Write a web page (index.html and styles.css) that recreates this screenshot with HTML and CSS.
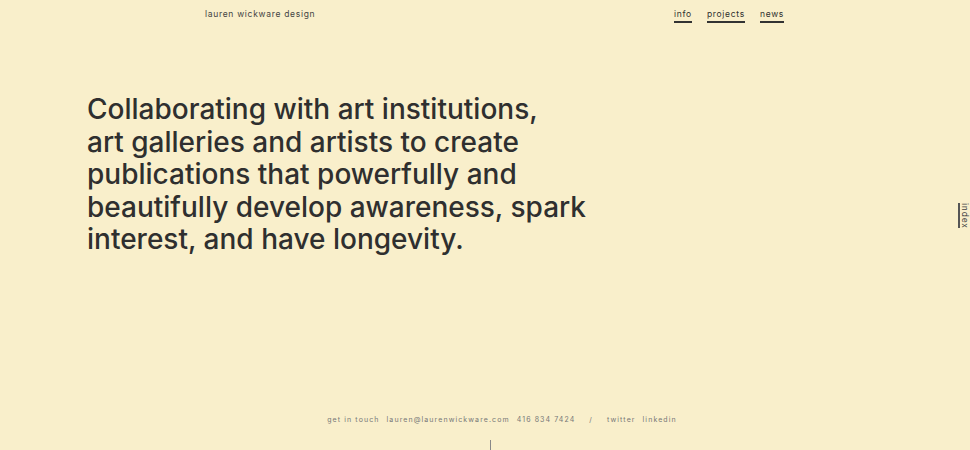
FILE: index.html
```html
<!DOCTYPE html>
<html lang="en">
<head>
<meta charset="utf-8">
<title>lauren wickware design</title>
<link rel="stylesheet" href="styles.css">
</head>
<body>
<div class="page">
  <header class="topbar">
    <a class="brand" href="#">lauren wickware design</a>
    <nav class="nav">
      <a href="#">info</a>
      <a href="#">projects</a>
      <a href="#">news</a>
    </nav>
  </header>
  <main class="hero">
    <h1>Collaborating with art institutions,<br> art galleries and artists to create publications that powerfully and beautifully develop awareness, spark interest, and have longevity.</h1>
  </main>
  <footer class="footer">
    <p class="contact"><span>get in touch</span><span>lauren@laurenwickware.com</span><span>416 834 7424</span><span class="sep">/</span><span>twitter</span><span>linkedin</span></p>
    <div class="arrow"></div>
  </footer>
  <a class="index-tab" href="#">index</a>
</div>
</body>
</html>
```
FILE: styles.css
```css
html, body {
  margin: 0;
  padding: 0;
  background: #f9efcb;
  color: #2f2f2f;
  font-family: "Inter", "Liberation Sans", sans-serif;
}
a { color: inherit; text-decoration: none; }
.page {
  height: 450px;
  display: flex;
  flex-direction: column;
  overflow: hidden;
}
.topbar {
  display: flex;
  justify-content: space-between;
  padding: 9px 186px 0 205px;
  font-size: 8.5px;
  letter-spacing: 0.7px;
  height: 22px;
  box-sizing: border-box;
}
.brand { color: #444; }
.nav { display: flex; gap: 15px; }
.nav a {
  border-bottom: 2px solid #333;
  padding-bottom: 1px;
  height: 11px;
  line-height: 11px;
}
.hero {
  padding: 71px 0 0 87px;
  flex: 1;
}
.hero h1 {
  margin: 0;
  width: 520px;
  font-size: 28px;
  font-weight: 500;
  line-height: 32.5px;
  letter-spacing: 0;
}
.footer {
  display: flex;
  flex-direction: column;
  align-items: center;
  padding-left: 34px;
}
.contact {
  margin: 0 0 16px;
  font-size: 7px;
  letter-spacing: 1.1px;
  color: #777;
  display: flex;
  gap: 7px;
}
.contact .sep { margin: 0 7px; }
.arrow {
  width: 1px;
  height: 10px;
  background: #888;
  margin-left: -24px;
}
.index-tab {
  position: absolute;
  right: 0;
  top: 203px;
  writing-mode: vertical-rl;
  font-size: 8.5px;
  letter-spacing: 0.8px;
  border-left: 2px solid #555;
  padding-left: 1px;
  color: #444;
  height: 25px;
  width: 9px;
}
```
